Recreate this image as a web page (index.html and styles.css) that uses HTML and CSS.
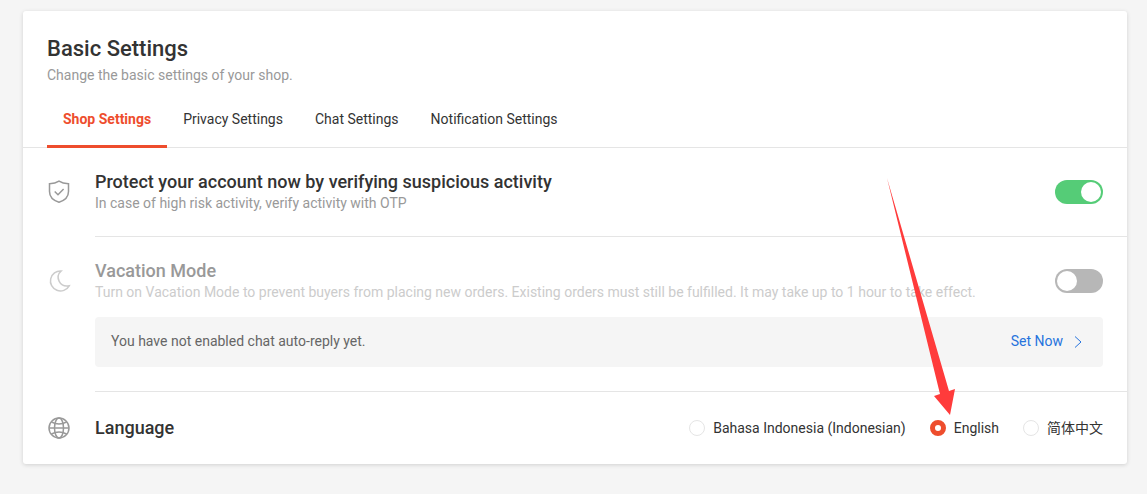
FILE: index.html
```html
<!DOCTYPE html>
<html lang="en">
<head>
  <meta charset="UTF-8">
  <meta name="viewport" content="width=device-width, initial-scale=1">
  <title>Basic Settings</title>
  <link rel="stylesheet" href="styles.css">
</head>
<body>
  <main class="card">
    <header class="card-header">
      <h1>Basic Settings</h1>
      <p class="desc">Change the basic settings of your shop.</p>
    </header>

    <nav class="tabs">
      <a class="tab active" href="#shop">Shop Settings</a>
      <a class="tab" href="#privacy">Privacy Settings</a>
      <a class="tab" href="#chat">Chat Settings</a>
      <a class="tab" href="#notification">Notification Settings</a>
    </nav>

    <section class="row">
      <svg class="icon" viewBox="0 0 24 24" aria-hidden="true">
        <path d="M12 1.200C9.500 2.900 6 3.700 2.500 3.700V11.500C2.500 17 6.500 20.500 12 22.200C17.500 20.500 21.500 17 21.500 11.500V3.700C18 3.700 14.500 2.900 12 1.200Z"/>
        <path d="M7.700 11.500L11 14.800L16.600 9"/>
      </svg>
      <div class="row-body">
        <div class="row-line">
          <div>
            <h2 id="otp-title">Protect your account now by verifying suspicious activity</h2>
            <p class="desc">In case of high risk activity, verify activity with OTP</p>
          </div>
          <input class="switch" type="checkbox" role="switch" aria-labelledby="otp-title" checked>
        </div>
      </div>
    </section>

    <section class="row">
      <svg class="icon muted" viewBox="0 0 24 24" aria-hidden="true">
        <path d="M14.200 2A10 10 0 1 0 22.200 16.800C18 17.600 14 15.800 12.200 12.300C10.300 8.500 11.200 4.600 14.200 2Z"/>
      </svg>
      <div class="row-body">
        <div class="row-line">
          <div class="muted">
            <h2 id="vacation-title">Vacation Mode</h2>
            <p class="desc">Turn on Vacation Mode to prevent buyers from placing new orders. Existing orders must still be fulfilled. It may take up to 1 hour to take effect.</p>
          </div>
          <input class="switch" type="checkbox" role="switch" aria-labelledby="vacation-title">
        </div>
        <div class="notice">
          <span>You have not enabled chat auto-reply yet.</span>
          <a href="#auto-reply">Set Now
            <svg class="chevron" viewBox="0 0 8 12" aria-hidden="true"><path d="M1 0.500L7 6L1 11.500"/></svg>
          </a>
        </div>
      </div>
    </section>

    <section class="row">
      <svg class="icon" viewBox="0 0 24 24" aria-hidden="true">
        <circle cx="12" cy="12" r="10"/>
        <ellipse cx="12" cy="12" rx="4.500" ry="10"/>
        <path d="M4.500 6Q12 10 19.500 6M2 12H22M4.500 18Q12 14 19.500 18"/>
      </svg>
      <div class="row-body">
        <div class="row-line">
          <h2 id="language-title">Language</h2>
          <div class="radios" role="radiogroup" aria-labelledby="language-title">
            <label><input type="radio" name="language" value="id">Bahasa Indonesia (Indonesian)</label>
            <label><input type="radio" name="language" value="en" checked>English</label>
            <label lang="zh-Hans"><input type="radio" name="language" value="zh">简体中文</label>
          </div>
        </div>
      </div>
    </section>

    <svg class="pointer" viewBox="0 0 68 237" aria-hidden="true">
      <path d="M0 0L62 213L68 211L63 237L47 218L53 216Z"/>
    </svg>
  </main>
</body>
</html>
```
FILE: styles.css
```css
* { box-sizing: border-box; }
body {
  margin: 0;
  padding: 11px 20px 30px 23px;
  background: #f5f5f5;
  color: #333;
  font: 14px/20px Roboto, "Noto Sans CJK SC", sans-serif;
}
h1, h2, p { margin: 0; }
h1 { font-size: 22px; line-height: 28px; font-weight: 500; }
h2 { font-size: 18px; line-height: 22px; font-weight: 500; }
a { color: inherit; text-decoration: none; }

.card {
  position: relative;
  background: #fff;
  border-radius: 3px;
  box-shadow: 0 1px 4px rgba(0, 0, 0, 0.15);
}
.card-header { padding: 24px 24px 0; }
.desc { color: #999; }
.card-header .desc { margin-top: 2px; }

.tabs {
  display: flex;
  height: 52px;
  margin-top: 11px;
  padding: 0 24px;
  border-bottom: 1px solid #e5e5e5;
}
.tab { height: 52px; padding: 13px 16px 0; }
.tab.active {
  color: #ee4d2d;
  font-weight: 700;
  border-bottom: 3px solid #ee4d2d;
}

.row { display: flex; gap: 24px; padding-left: 24px; }
.icon {
  flex: none;
  width: 24px;
  height: 24px;
  margin-top: 32px;
  fill: none;
  stroke: #999;
  stroke-width: 1.5;
}
.icon.muted { stroke: #ccc; }
.row:last-of-type .icon { margin-top: 24px; }
.row-body {
  flex: 1;
  padding: 23px 24px 24px 0;
  border-bottom: 1px solid #e5e5e5;
}
.row:first-of-type .row-body { padding-bottom: 23px; }
.row:last-of-type .row-body { padding: 24px 24px 24px 0; border-bottom: 0; }
.row-line {
  display: flex;
  align-items: center;
  justify-content: space-between;
  gap: 24px;
}
.row:last-of-type .row-line { min-height: 24px; }
.muted h2 { color: #999; }
.muted .desc { color: #ccc; }

.switch {
  appearance: none;
  flex: none;
  width: 48px;
  height: 24px;
  margin: 0;
  padding: 2px;
  border-radius: 12px;
  background: #b7b7b7;
}
.switch::before {
  content: "";
  display: block;
  width: 20px;
  height: 20px;
  border-radius: 50%;
  background: #fff;
}
.switch:checked { background: #55cc77; }
.switch:checked::before { margin-left: auto; }

.notice {
  display: flex;
  justify-content: space-between;
  align-items: center;
  height: 50px;
  margin-top: 15px;
  padding: 0 21px 3px 16px;
  border-radius: 4px;
  background: #f5f5f5;
  color: #666;
}
.notice a { display: flex; align-items: center; gap: 11px; color: #2673dd; }
.chevron { width: 8px; height: 12px; margin-top: 2px; fill: none; stroke: #2673dd; }

.radios { display: flex; gap: 24px; }
.radios label { display: flex; align-items: center; gap: 8px; }
.radios input {
  appearance: none;
  width: 16px;
  height: 16px;
  margin: 0;
  border: 1px solid #e5e5e5;
  border-radius: 50%;
  background: #fff;
}
.radios input:checked { border: 5px solid #ee4d2d; }

/* arrow over the language choice */
.pointer {
  position: absolute;
  right: 172px;
  bottom: 49px;
  width: 68px;
  height: 237px;
  fill: #ff3b3b;
  pointer-events: none;
}
```
